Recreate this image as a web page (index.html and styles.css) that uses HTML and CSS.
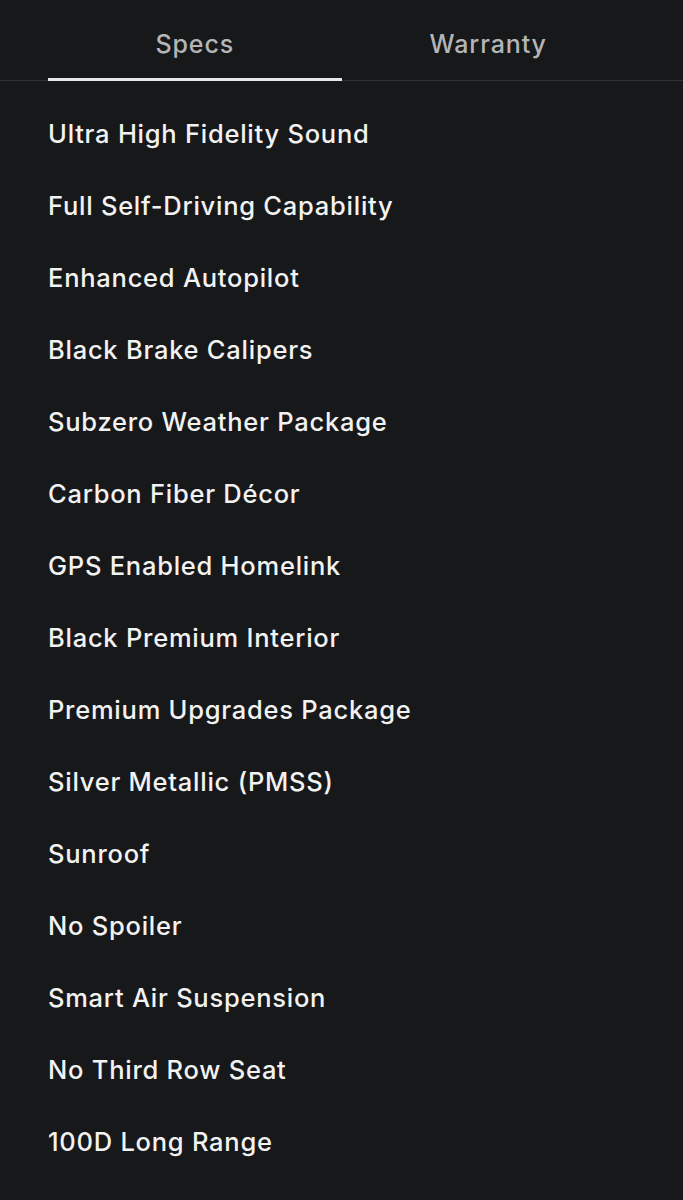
FILE: index.html
```html
<!DOCTYPE html>
<html lang="en">

<head>
    <meta charset="UTF-8" />
    <meta name="viewport" content="width=device-width, initial-scale=1.0" />
    <title>Vehicle Specs</title>
    <link rel="stylesheet" href="styles.css">
</head>

<body>
    <div class="tabs">
        <div class="tab active">Specs</div>
        <div class="tab">Warranty</div>
    </div>

    <ul class="spec-list">
        <li>Ultra High Fidelity Sound</li>
        <li>Full Self-Driving Capability</li>
        <li>Enhanced Autopilot</li>
        <li>Black Brake Calipers</li>
        <li>Subzero Weather Package</li>
        <li>Carbon Fiber Décor</li>
        <li>GPS Enabled Homelink</li>
        <li>Black Premium Interior</li>
        <li>Premium Upgrades Package</li>
        <li>Silver Metallic (PMSS)</li>
        <li>Sunroof</li>
        <li>No Spoiler</li>
        <li>Smart Air Suspension</li>
        <li>No Third Row Seat</li>
        <li>100D Long Range</li>
    </ul>
</body>

</html>
```

FILE: styles.css
```css
* {
    margin: 0;
    padding: 0;
    box-sizing: border-box;
}

body {
    font-family: 'Inter', 'Roboto', sans-serif;
    background: #17181a;
    color: #f2f2f2;
    width: 683px;
    height: 1200px;
    overflow: hidden;
}

.tabs {
    display: grid;
    grid-template-columns: 1fr 1fr;
    padding: 0 48px;
    border-bottom: 1px solid #303133;
}

.tab {
    height: 81px;
    display: flex;
    align-items: center;
    justify-content: center;
    padding-top: 10px;
    font-size: 25px;
    font-weight: 500;
    letter-spacing: 0.9px;
    color: #b4b5b7;
    border-bottom: 3px solid transparent;
    margin-bottom: -1px;
}

.tab.active {
    border-bottom-color: #e6e6e6;
}

.spec-list {
    list-style: none;
    padding: 16px 48px 0;
}

.spec-list li {
    height: 72px;
    display: flex;
    align-items: center;
    font-size: 25.5px;
    font-weight: 500;
    letter-spacing: 0.75px;
}
```
